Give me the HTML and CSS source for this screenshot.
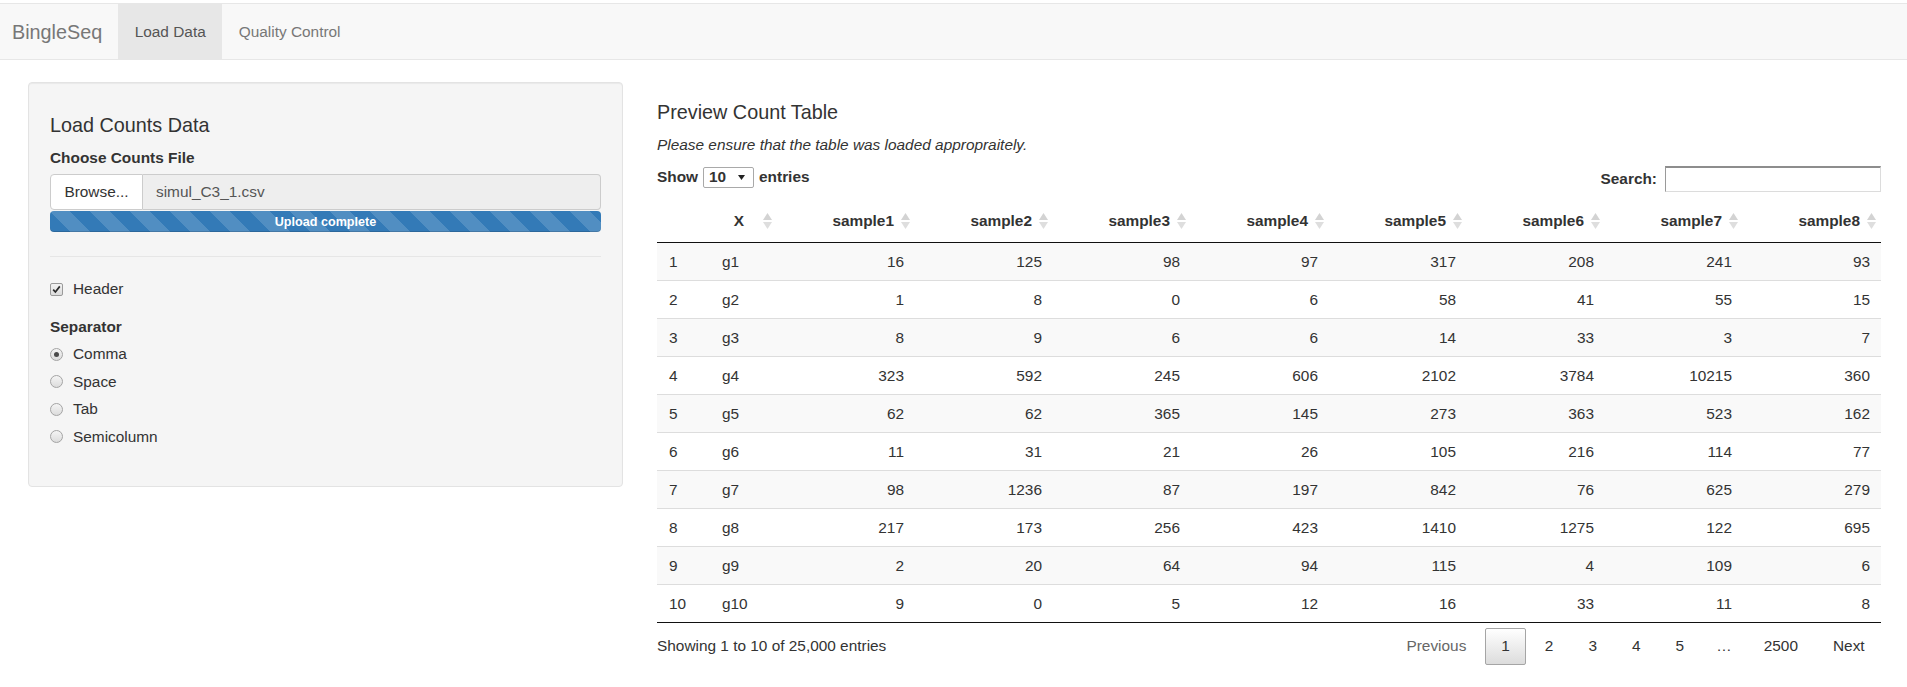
FILE: index.html
```html
<!DOCTYPE html>
<html>
<head>
<meta charset="utf-8">
<title>BingleSeq</title>
<link rel="stylesheet" href="styles.css">
</head>
<body>
<div class="topstrip"></div>
<nav class="navbar">
  <div class="brand">BingleSeq</div>
  <div class="nav-item active">Load Data</div>
  <div class="nav-item">Quality Control</div>
</nav>

<div class="content">
  <aside class="well">
    <h4 class="panel-title">Load Counts Data</h4>
    <label class="ctl-label">Choose Counts File</label>
    <div class="file-input">
      <span class="browse">Browse...</span>
      <span class="file-name">simul_C3_1.csv</span>
    </div>
    <div class="progress"><span>Upload complete</span></div>
    <hr class="sep">
    <div class="check-row"><span class="cb"><svg width="9" height="9" viewBox="0 0 9 9"><path d="M1.2 4.6 L3.4 7 L7.8 1.4" fill="none" stroke="#2b2b2b" stroke-width="1.7"/></svg></span>Header</div>
    <label class="ctl-label group-label">Separator</label>
    <div class="radio-row"><span class="rb checked"></span>Comma</div>
    <div class="radio-row"><span class="rb"></span>Space</div>
    <div class="radio-row"><span class="rb"></span>Tab</div>
    <div class="radio-row last"><span class="rb"></span>Semicolumn</div>
  </aside>

  <main class="main">
    <h4 class="main-title">Preview Count Table</h4>
    <p class="note">Please ensure that the table was loaded appropraitely.</p>
    <div class="dt-controls">
      <div class="dt-length">
        <b>Show</b>
        <span class="select"><b>10</b><svg width="7" height="5" viewBox="0 0 7 5"><path d="M0 0 H7 L3.5 5 Z" fill="#222"/></svg></span>
        <b>entries</b>
      </div>
      <div class="dt-filter">
        <b>Search:</b>
        <span class="search-box"></span>
      </div>
    </div>

    <table class="dt">
      <colgroup>
        <col class="c-idx"><col class="c-x">
        <col class="c-num"><col class="c-num"><col class="c-num"><col class="c-num">
        <col class="c-num"><col class="c-num"><col class="c-num"><col class="c-num">
      </colgroup>
      <thead>
        <tr>
          <th class="idx"></th>
          <th class="center sortable">X<svg class="sort" width="9" height="16" viewBox="0 0 9 16"><path d="M4.5 0 L9 7 H0 Z" fill="#d3d3d3"/><path d="M0 9 H9 L4.5 16 Z" fill="#dedede"/></svg></th>
          <th class="right sortable">sample1<svg class="sort" width="9" height="16" viewBox="0 0 9 16"><path d="M4.5 0 L9 7 H0 Z" fill="#d3d3d3"/><path d="M0 9 H9 L4.5 16 Z" fill="#dedede"/></svg></th>
          <th class="right sortable">sample2<svg class="sort" width="9" height="16" viewBox="0 0 9 16"><path d="M4.5 0 L9 7 H0 Z" fill="#d3d3d3"/><path d="M0 9 H9 L4.5 16 Z" fill="#dedede"/></svg></th>
          <th class="right sortable">sample3<svg class="sort" width="9" height="16" viewBox="0 0 9 16"><path d="M4.5 0 L9 7 H0 Z" fill="#d3d3d3"/><path d="M0 9 H9 L4.5 16 Z" fill="#dedede"/></svg></th>
          <th class="right sortable">sample4<svg class="sort" width="9" height="16" viewBox="0 0 9 16"><path d="M4.5 0 L9 7 H0 Z" fill="#d3d3d3"/><path d="M0 9 H9 L4.5 16 Z" fill="#dedede"/></svg></th>
          <th class="right sortable">sample5<svg class="sort" width="9" height="16" viewBox="0 0 9 16"><path d="M4.5 0 L9 7 H0 Z" fill="#d3d3d3"/><path d="M0 9 H9 L4.5 16 Z" fill="#dedede"/></svg></th>
          <th class="right sortable">sample6<svg class="sort" width="9" height="16" viewBox="0 0 9 16"><path d="M4.5 0 L9 7 H0 Z" fill="#d3d3d3"/><path d="M0 9 H9 L4.5 16 Z" fill="#dedede"/></svg></th>
          <th class="right sortable">sample7<svg class="sort" width="9" height="16" viewBox="0 0 9 16"><path d="M4.5 0 L9 7 H0 Z" fill="#d3d3d3"/><path d="M0 9 H9 L4.5 16 Z" fill="#dedede"/></svg></th>
          <th class="right sortable">sample8<svg class="sort" width="9" height="16" viewBox="0 0 9 16"><path d="M4.5 0 L9 7 H0 Z" fill="#d3d3d3"/><path d="M0 9 H9 L4.5 16 Z" fill="#dedede"/></svg></th>
        </tr>
      </thead>
      <tbody>
        <tr><td>1</td><td>g1</td><td>16</td><td>125</td><td>98</td><td>97</td><td>317</td><td>208</td><td>241</td><td>93</td></tr>
        <tr><td>2</td><td>g2</td><td>1</td><td>8</td><td>0</td><td>6</td><td>58</td><td>41</td><td>55</td><td>15</td></tr>
        <tr><td>3</td><td>g3</td><td>8</td><td>9</td><td>6</td><td>6</td><td>14</td><td>33</td><td>3</td><td>7</td></tr>
        <tr><td>4</td><td>g4</td><td>323</td><td>592</td><td>245</td><td>606</td><td>2102</td><td>3784</td><td>10215</td><td>360</td></tr>
        <tr><td>5</td><td>g5</td><td>62</td><td>62</td><td>365</td><td>145</td><td>273</td><td>363</td><td>523</td><td>162</td></tr>
        <tr><td>6</td><td>g6</td><td>11</td><td>31</td><td>21</td><td>26</td><td>105</td><td>216</td><td>114</td><td>77</td></tr>
        <tr><td>7</td><td>g7</td><td>98</td><td>1236</td><td>87</td><td>197</td><td>842</td><td>76</td><td>625</td><td>279</td></tr>
        <tr><td>8</td><td>g8</td><td>217</td><td>173</td><td>256</td><td>423</td><td>1410</td><td>1275</td><td>122</td><td>695</td></tr>
        <tr><td>9</td><td>g9</td><td>2</td><td>20</td><td>64</td><td>94</td><td>115</td><td>4</td><td>109</td><td>6</td></tr>
        <tr><td>10</td><td>g10</td><td>9</td><td>0</td><td>5</td><td>12</td><td>16</td><td>33</td><td>11</td><td>8</td></tr>
      </tbody>
    </table>

    <div class="dt-footer">
      <div class="dt-info">Showing 1 to 10 of 25,000 entries</div>
      <div class="dt-paginate">
        <span class="pbtn disabled">Previous</span>
        <span class="pbtn current">1</span>
        <span class="pbtn">2</span>
        <span class="pbtn">3</span>
        <span class="pbtn">4</span>
        <span class="pbtn">5</span>
        <span class="ellipsis">…</span>
        <span class="pbtn">2500</span>
        <span class="pbtn">Next</span>
      </div>
    </div>
  </main>
</div>
</body>
</html>
```

FILE: styles.css
```css
html, body {
  margin: 0;
  padding: 0;
  background: #fff;
}

body {
  font-family: "Liberation Sans", Arial, sans-serif;
  font-size: 15.4px;
  line-height: 22px;
  color: #333;
}

.topstrip {
  height: 3px;
  background: #fff;
}

/* ---------- navbar ---------- */
.navbar {
  display: flex;
  align-items: stretch;
  height: 55px;
  background: #f8f8f8;
  border-top: 1px solid #e7e7e7;
  border-bottom: 1px solid #e7e7e7;
}

.brand {
  display: flex;
  align-items: center;
  padding: 0 16px 0 12px;
  font-size: 19.8px;
  color: #777;
}

.nav-item {
  display: flex;
  align-items: center;
  padding: 0 16.5px;
  color: #777;
}

.nav-item.active {
  background: #e7e7e7;
  color: #555;
}

/* ---------- layout ---------- */
.content {
  display: flex;
  align-items: flex-start;
  gap: 34px;
  padding: 22px 26px 0 28px;
}

/* ---------- sidebar well ---------- */
.well {
  width: 595px;
  flex: none;
  box-sizing: border-box;
  display: flex;
  flex-direction: column;
  padding: 21px;
  background: #f5f5f5;
  border: 1px solid #e3e3e3;
  border-radius: 4px;
  box-shadow: inset 0 1px 1px rgba(0, 0, 0, 0.05);
}

.panel-title {
  margin: 10px 0 10.5px;
  font-size: 19.8px;
  font-weight: normal;
  line-height: 22px;
  color: #333;
}

.ctl-label {
  display: block;
  font-weight: bold;
  margin-bottom: 5.5px;
}

.file-input {
  display: flex;
  height: 36px;
  box-sizing: border-box;
}

.browse {
  display: flex;
  align-items: center;
  justify-content: center;
  width: 93px;
  box-sizing: border-box;
  background: #fff;
  border: 1px solid #ccc;
  border-radius: 4px 0 0 4px;
  color: #333;
}

.file-name {
  flex: 1;
  display: flex;
  align-items: center;
  padding-left: 13px;
  background: #eee;
  border: 1px solid #ccc;
  border-left: none;
  border-radius: 0 4px 4px 0;
  color: #555;
}

.progress {
  margin-top: 1px;
  height: 21px;
  border-radius: 4px;
  background-color: #337ab7;
  background-image: linear-gradient(45deg,
    rgba(255, 255, 255, 0.15) 25%, transparent 25%,
    transparent 50%, rgba(255, 255, 255, 0.15) 50%,
    rgba(255, 255, 255, 0.15) 75%, transparent 75%, transparent);
  background-size: 40px 40px;
  box-shadow: inset 0 -1px 0 rgba(0, 0, 0, 0.15);
  display: flex;
  align-items: center;
  justify-content: center;
  color: #fff;
  font-weight: bold;
  font-size: 12.6px;
}

.sep {
  margin: 24px 0 21px;
  border: 0;
  border-top: 1px solid #e6e6e6;
  height: 0;
}

.check-row,
.radio-row {
  display: flex;
  align-items: center;
  height: 22px;
}

.cb {
  width: 13px;
  height: 13px;
  box-sizing: border-box;
  margin-right: 10px;
  border: 1px solid #9a9a9a;
  border-radius: 2px;
  background: linear-gradient(#f2f2f2, #dcdcdc);
  display: flex;
  align-items: center;
  justify-content: center;
}

.group-label {
  margin: 16px 0 5px;
}

.radio-row {
  margin-bottom: 5.5px;
}

.radio-row.last {
  margin-bottom: 17.5px;
}

.rb {
  width: 13px;
  height: 13px;
  box-sizing: border-box;
  margin-right: 10px;
  border: 1px solid #a4a4a4;
  border-radius: 50%;
  background: linear-gradient(#f4f4f4, #dcdcdc);
  display: flex;
  align-items: center;
  justify-content: center;
}

.rb.checked::after {
  content: "";
  width: 5px;
  height: 5px;
  border-radius: 50%;
  background: #4a4a4a;
}

/* ---------- main ---------- */
.main {
  flex: 1;
  min-width: 0;
  display: flex;
  flex-direction: column;
}

.main-title {
  margin: 19px 0 11px;
  font-size: 19.8px;
  font-weight: normal;
  line-height: 22px;
  color: #333;
}

.note {
  margin: 0 0 10px;
  font-style: italic;
}

.dt-controls {
  display: flex;
  justify-content: space-between;
  align-items: flex-start;
  height: 26px;
}

.dt-length {
  display: flex;
  align-items: center;
  height: 22px;
  gap: 5px;
}

.select {
  display: flex;
  align-items: center;
  justify-content: space-between;
  width: 51px;
  height: 21px;
  box-sizing: border-box;
  padding: 0 8px 0 5px;
  border: 1px solid #a9a9a9;
  border-radius: 2px;
  background: #fff;
}

.dt-filter {
  display: flex;
  align-items: center;
  height: 26px;
  gap: 8px;
}

.search-box {
  width: 216px;
  height: 26px;
  box-sizing: border-box;
  border: 1px solid;
  border-color: #8d8d8d #dcdcdc #dcdcdc #9a9a9a;
  border-top-width: 2px;
  background: #fff;
}

/* ---------- table ---------- */
.dt {
  margin-top: 8px;
  width: 100%;
  table-layout: fixed;
  border-collapse: separate;
  border-spacing: 0;
  border-bottom: 1px solid #111;
}

.c-idx { width: 54px; }
.c-x { width: 66px; }
.c-num { width: 138px; }

.dt th {
  position: relative;
  padding: 10px 21px 10px 11px;
  line-height: 22px;
  font-weight: bold;
  color: #333;
  border-bottom: 1px solid #111;
}

.dt th.center { text-align: center; }
.dt th.right { text-align: right; }

.sort {
  position: absolute;
  right: 5px;
  top: 50%;
  margin-top: -8px;
}

.dt td {
  padding: 8px 11px;
  line-height: 21px;
  border-top: 1px solid #ddd;
  text-align: right;
}

.dt td:nth-child(1),
.dt td:nth-child(2) {
  text-align: left;
}

.dt td:nth-child(1) {
  padding-left: 12px;
}

.dt tbody tr:first-child td {
  border-top: none;
}

.dt tbody tr:nth-child(odd) td {
  background: #f9f9f9;
}

/* ---------- footer ---------- */
.dt-footer {
  display: flex;
  justify-content: space-between;
  align-items: center;
  margin-top: 4.5px;
}

.dt-paginate {
  display: flex;
  align-items: center;
}

.pbtn {
  box-sizing: border-box;
  min-width: 1.5em;
  padding: 7.5px 15.4px;
  margin-left: 2.2px;
  line-height: 20px;
  border: 1px solid transparent;
  border-radius: 2px;
  text-align: center;
  color: #333;
}

.pbtn.disabled {
  color: #666;
}

.pbtn.current {
  border-color: #a5a5a5;
  background: linear-gradient(to bottom, #fff 0%, #dcdcdc 100%);
}

.ellipsis {
  padding: 0 13.6px;
  margin-left: 2.2px;
  color: #333;
}
```
